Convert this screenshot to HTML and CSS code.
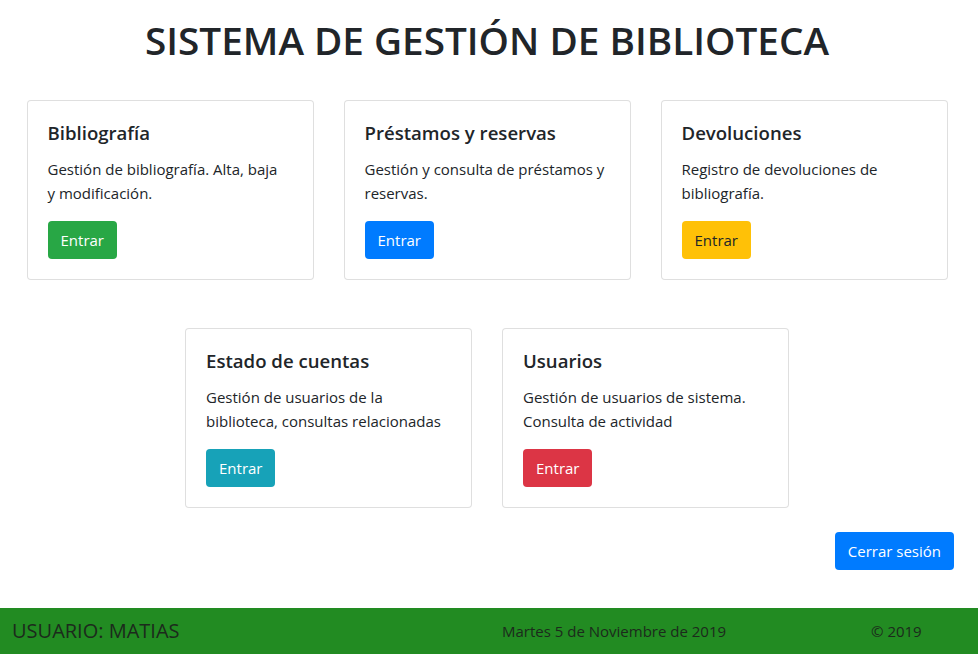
FILE: index.html
```html
<!DOCTYPE html>
<html lang="es">
<head>
<meta charset="utf-8">
<title>Sistema de Gestión de Biblioteca</title>
<link rel="stylesheet" href="styles.css">
</head>
<body>
<main class="page">
  <h1 class="title">SISTEMA DE GESTIÓN DE BIBLIOTECA</h1>
  <div class="card-row">
    <div class="card">
      <h5 class="card-title">Bibliografía</h5>
      <p class="card-text">Gestión de bibliografía. Alta, baja y&nbsp;modificación.</p>
      <button class="btn btn-success">Entrar</button>
    </div>
    <div class="card">
      <h5 class="card-title">Préstamos y reservas</h5>
      <p class="card-text">Gestión y consulta de préstamos y reservas.</p>
      <button class="btn btn-primary">Entrar</button>
    </div>
    <div class="card">
      <h5 class="card-title">Devoluciones</h5>
      <p class="card-text">Registro de devoluciones de bibliografía.</p>
      <button class="btn btn-warning">Entrar</button>
    </div>
  </div>
  <div class="card-row card-row-second">
    <div class="card">
      <h5 class="card-title">Estado de cuentas</h5>
      <p class="card-text">Gestión de usuarios de la biblioteca, consultas relacionadas</p>
      <button class="btn btn-info">Entrar</button>
    </div>
    <div class="card">
      <h5 class="card-title">Usuarios</h5>
      <p class="card-text">Gestión de usuarios de sistema. Consulta de actividad</p>
      <button class="btn btn-danger">Entrar</button>
    </div>
  </div>
  <div class="actions">
    <button class="btn btn-primary">Cerrar sesión</button>
  </div>
</main>
<footer class="footer">
  <span class="footer-user">USUARIO: MATIAS</span>
  <span class="footer-date">Martes 5 de Noviembre de 2019</span>
  <span class="footer-copy">© 2019</span>
</footer>
</body>
</html>
```
FILE: styles.css
```css
* { box-sizing: border-box; }
html, body { margin: 0; padding: 0; }
body {
  font-family: "Open Sans", "Noto Sans", sans-serif;
  font-size: 15px;
  line-height: 24px;
  color: #212529;
  background: #fff;
  min-height: 100vh;
  display: flex;
  flex-direction: column;
}
.page {
  width: 950px;
  margin-left: 12px;
}
.title {
  margin: 16px 0 0;
  font-size: 38.7px;
  line-height: 48px;
  font-weight: 600;
  text-align: center;
}
.card-row {
  display: flex;
  justify-content: center;
  gap: 30px;
  margin-top: 36px;
}
.card-row-second { margin-top: 48px; }
.card {
  width: 287px;
  height: 180px;
  border: 1px solid rgba(0,0,0,.125);
  border-radius: 4px;
  padding: 20px;
  background: #fff;
}
.card-title {
  margin: 0 0 12px;
  font-size: 18.6px;
  line-height: 24px;
  font-weight: 600;
}
.card-text {
  margin: 0 0 16px;
}
.btn {
  display: inline-block;
  font-family: inherit;
  font-size: 15px;
  line-height: 24px;
  padding: 6px 12px;
  height: 38px;
  border: 1px solid transparent;
  border-radius: 4px;
  color: #fff;
  cursor: pointer;
}
.btn-success { background: #28a745; }
.btn-primary { background: #007bff; }
.btn-warning { background: #ffc107; color: #212529; }
.btn-info { background: #17a2b8; }
.btn-danger { background: #dc3545; }
.actions {
  display: flex;
  justify-content: flex-end;
  padding-right: 8px;
  margin-top: 24px;
}
.footer {
  margin-top: auto;
  height: 46px;
  background: #228b22;
  display: flex;
  align-items: center;
  color: #1c2a1c;
}
.footer-user {
  padding-left: 12px;
  font-size: 20px;
  width: 502px;
}
.footer-date {
  font-size: 15px;
  width: 369px;
}
.footer-copy {
  font-size: 15px;
}
```
